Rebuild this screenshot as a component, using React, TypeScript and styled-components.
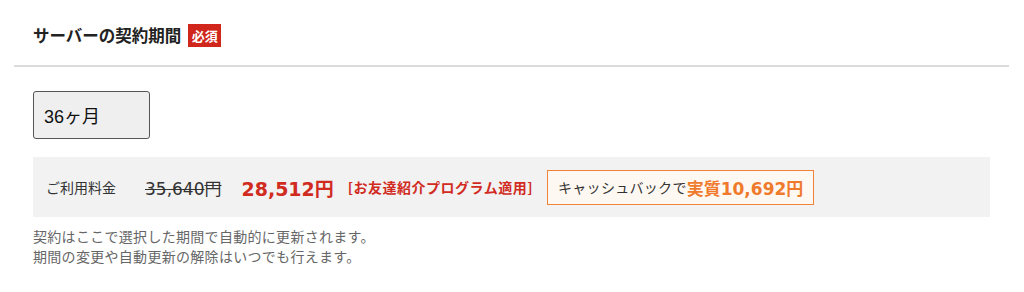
import React from 'react'
import styled, { createGlobalStyle } from 'styled-components'

const GlobalStyle = createGlobalStyle`
  html, body {
    margin: 0;
    padding: 0;
    background: #fff;
  }
  body {
    font-family: 'DejaVu Sans', 'Noto Sans CJK JP', sans-serif;
    color: #333;
  }
`

const jp = `'Noto Sans CJK JP', sans-serif`
const num = `'DejaVu Sans', 'Noto Sans CJK JP', sans-serif`

function App() {
  return (
    <>
      <GlobalStyle />
      <Section>
        <Header>
          <Title>サーバーの契約期間</Title>
          <Required>必須</Required>
        </Header>
        <Body>
          <PeriodSelect>36ヶ月</PeriodSelect>
          <PriceBar>
            <PriceLabel>ご利用料金</PriceLabel>
            <OldPrice>
              35,640<Yen>円</Yen>
            </OldPrice>
            <NewPrice>
              28,512<Yen>円</Yen>
            </NewPrice>
            <Campaign>[お友達紹介プログラム適用]</Campaign>
            <Cashback>
              キャッシュバックで
              <CashbackAmount>
                実質10,692<Yen>円</Yen>
              </CashbackAmount>
            </Cashback>
          </PriceBar>
          <Note>
            契約はここで選択した期間で自動的に更新されます。
            <br />
            期間の変更や自動更新の解除はいつでも行えます。
          </Note>
        </Body>
      </Section>
    </>
  )
}

const Section = styled.div`
  padding: 0 15px 0 14px;
`

const Header = styled.div`
  display: flex;
  align-items: center;
  gap: 7px;
  padding: 24px 19px 18px;
  border-bottom: 2px solid #dcdcdc;
`

const Title = styled.h2`
  margin: 0;
  font-family: ${jp};
  font-size: 16.5px;
  font-weight: 700;
  color: #222;
  line-height: 23px;
`

const Required = styled.span`
  display: inline-flex;
  align-items: center;
  justify-content: center;
  width: 33px;
  height: 23px;
  background: #d0261c;
  color: #fff;
  font-family: ${jp};
  font-size: 13px;
  font-weight: 700;
`

const Body = styled.div`
  padding: 24px 19px 0;
`

const PeriodSelect = styled.div`
  box-sizing: border-box;
  display: flex;
  align-items: center;
  width: 117px;
  height: 48px;
  padding: 0 10px;
  border: 1.5px solid #555;
  border-radius: 3px;
  background: #efefef;
  font-family: 'Liberation Sans', 'Noto Sans CJK JP', sans-serif;
  font-size: 18px;
  color: #111;
`

const PriceBar = styled.div`
  display: flex;
  align-items: center;
  height: 60px;
  margin-top: 18px;
  padding: 0 13px;
  background: #f2f2f2;
`

const PriceLabel = styled.span`
  font-family: ${jp};
  font-size: 14px;
  color: #333;
  margin-right: 29px;
`

const Yen = styled.span`
  font-family: ${jp};
`

const OldPrice = styled.span`
  font-family: ${num};
  font-size: 17px;
  color: #333;
  text-decoration: line-through;
  margin-right: 20px;
`

const NewPrice = styled.span`
  font-family: ${num};
  font-size: 19px;
  font-weight: 700;
  color: #d12b1f;
  margin-right: 14px;
`

const Campaign = styled.span`
  font-family: ${jp};
  font-size: 14px;
  font-weight: 700;
  color: #d12b1f;
  letter-spacing: 0.5px;
  margin-right: 14px;
`

const Cashback = styled.div`
  box-sizing: border-box;
  display: flex;
  align-items: center;
  height: 35px;
  padding: 0 10px;
  border: 1px solid #f0823a;
  background: #fdf8f1;
  font-family: ${jp};
  font-size: 14px;
  letter-spacing: 0.3px;
  color: #333;
`

const CashbackAmount = styled.span`
  font-family: ${num};
  font-size: 17px;
  font-weight: 700;
  letter-spacing: 0;
  color: #f07a2c;
`

const Note = styled.p`
  margin: 9px 0 0;
  font-family: ${jp};
  font-size: 14px;
  letter-spacing: 0.3px;
  line-height: 20px;
  color: #666;
`

export default App
